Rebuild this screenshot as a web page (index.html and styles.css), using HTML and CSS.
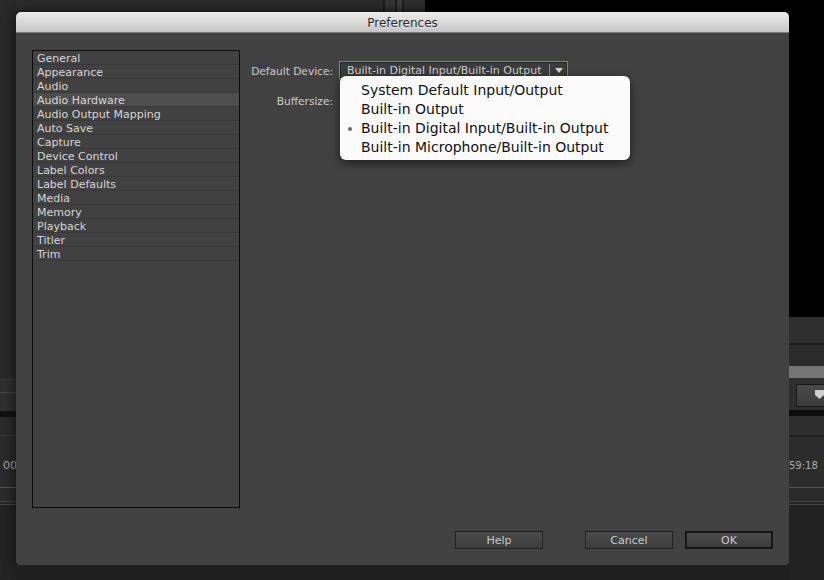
FILE: index.html
```html
<!DOCTYPE html>
<html lang="en">
<head>
    <meta charset="UTF-8">
    <meta name="viewport" content="width=device-width, initial-scale=1.0">
    <title>Preferences</title>
    <link rel="stylesheet" href="styles.css">
</head>
<body>
    <div class="desk">
        <div class="side side-left">
            <span class="timecode">00</span>
        </div>
        <div class="top-strip"></div>

        <div class="dialog">
            <div class="titlebar">Preferences</div>
            <div class="dialog-body">
                <div class="main-row">
                    <ul class="categories">
                        <li>General</li>
                        <li>Appearance</li>
                        <li>Audio</li>
                        <li class="selected">Audio Hardware</li>
                        <li>Audio Output Mapping</li>
                        <li>Auto Save</li>
                        <li>Capture</li>
                        <li>Device Control</li>
                        <li>Label Colors</li>
                        <li>Label Defaults</li>
                        <li>Media</li>
                        <li>Memory</li>
                        <li>Playback</li>
                        <li>Titler</li>
                        <li>Trim</li>
                    </ul>

                    <div class="settings">
                        <label class="field-label">Default Device:</label>
                        <div class="select">
                            <span class="select-value">Built-in Digital Input/Built-in Output</span>
                            <span class="select-arrow"></span>
                            <ul class="popup">
                                <li>System Default Input/Output</li>
                                <li>Built-in Output</li>
                                <li class="checked">Built-in Digital Input/Built-in Output</li>
                                <li>Built-in Microphone/Built-in Output</li>
                            </ul>
                        </div>
                        <label class="field-label">Buffersize:</label>
                        <div></div>
                    </div>
                </div>

                <div class="buttons">
                    <button class="btn btn-help">Help</button>
                    <button class="btn btn-cancel">Cancel</button>
                    <button class="btn btn-default">OK</button>
                </div>
            </div>
        </div>

        <div class="side side-right">
            <div class="tc-button"><span class="tc-arrow"></span></div>
            <span class="timecode timecode-right">59:18</span>
        </div>
        <div class="bottom-strip"></div>
    </div>
</body>
</html>
```

FILE: styles.css
```css
* {
    margin: 0;
    padding: 0;
    box-sizing: border-box;
}

body {
    background: #1e1e1e;
    font-family: "DejaVu Sans", Verdana, sans-serif;
    overflow: hidden;
}

.desk {
    display: grid;
    grid-template-columns: 16px 773px 35px;
    grid-template-rows: 12px 553px 15px;
    width: 824px;
    height: 580px;
}

/* app panels peeking out behind the dialog */
.side {
    grid-row: 1 / 4;
    overflow: hidden;
}

.side-left {
    grid-column: 1;
    background: linear-gradient(to bottom,
        #292929 0 379px, #3a3a3a 379px 380px, #2f2f2f 380px 392px,
        #454545 392px 393px, #2f2f2f 393px 411px, #111 411px 417px,
        #2a2a2a 417px 435px, #3c3c3c 435px 436px, #2b2b2b 436px 487px,
        #555 487px 488px, #2b2b2b 488px 501px, #444 501px 502px,
        #262626 502px 504px, #444 504px 505px, #232323 505px);
    padding-top: 459px;
    padding-left: 3px;
}

.side-right {
    grid-column: 3;
    background: linear-gradient(to bottom,
        #000 0 317px, #2f2f2f 317px 343px, #1c1c1c 343px 345px,
        #2c2c2c 345px 366px, #757575 366px 378px, #2e2e2e 378px 410px,
        #0c0c0c 410px 416px, #2d2d2d 416px 435px, #1f1f1f 435px 437px,
        #2c2c2c 437px 487px, #555 487px 488px, #2b2b2b 488px 501px,
        #444 501px 502px, #262626 502px 504px, #444 504px 505px,
        #222 505px);
    padding-top: 384px;
}

.top-strip {
    grid-column: 2;
    grid-row: 1;
    background: linear-gradient(to right,
        #2c2c2c 0 367px, #1b1b1b 367px 369px, #353535 369px 379px,
        #1e1e1e 379px 381px, #3c3c3c 381px 386px, #1e1e1e 386px 388px,
        #2e2e2e 388px 409px, #000 409px);
}

.bottom-strip {
    grid-column: 2;
    grid-row: 3;
    background: #1f1f1f;
}

.timecode {
    display: block;
    color: #a9a9a9;
    font-size: 11px;
    line-height: 14px;
    white-space: nowrap;
}

.timecode-right {
    margin-top: 52px;
    font-size: 10px;
}

.tc-button {
    width: 30px;
    height: 23px;
    margin-left: 7px;
    border: 1px solid #161616;
    background: linear-gradient(#4a4a4a, #3a3a3a);
    padding: 5px 0 0 18px;
}

.tc-arrow {
    display: block;
    width: 9px;
    height: 9px;
    background: #cfcfcf;
    clip-path: polygon(0 0, 100% 0, 100% 55%, 50% 100%, 0 55%);
}

/* dialog */
.dialog {
    grid-column: 2;
    grid-row: 2;
    display: flex;
    flex-direction: column;
    border-radius: 5px 5px 4px 4px;
    box-shadow: 0 0 14px rgba(0, 0, 0, 0.7);
    background: #414141;
}

.titlebar {
    height: 21px;
    padding-top: 2px;
    background: linear-gradient(#ececec, #c6c6c6);
    border-bottom: 1px solid #7c7c7c;
    border-radius: 5px 5px 0 0;
    color: #2a2a2a;
    font-size: 12px;
    line-height: 18px;
    text-align: center;
    text-shadow: 0 1px 0 rgba(255, 255, 255, 0.6);
}

.dialog-body {
    flex: 1;
    display: flex;
    flex-direction: column;
    padding: 17px 16px 16px;
}

.main-row {
    display: flex;
    height: 458px;
}

.categories {
    list-style: none;
    width: 208px;
    height: 458px;
    border: 1px solid #0c0c0c;
    background: #414141;
}

.categories li {
    height: 14px;
    padding: 1px 0 0 4px;
    line-height: 13px;
    border-bottom: 1px solid #383838;
    color: #d6d6d6;
    font-size: 11px;
}

.categories li.selected {
    background: #4e4e4e;
}

.settings {
    display: grid;
    grid-template-columns: 85px 229px;
    grid-template-rows: 18px 18px;
    row-gap: 12px;
    column-gap: 6px;
    align-items: center;
    margin-left: 8px;
    margin-top: 11px;
    align-content: start;
}

.field-label {
    padding-top: 2px;
    text-align: right;
    color: #cdcdcd;
    font-size: 10.6px;
    white-space: nowrap;
}

.select {
    position: relative;
    display: flex;
    align-items: center;
    height: 18px;
    border: 1px solid #a3822f;
    background: #3b3b3b;
    box-shadow: inset 0 0 0 1px #262626;
}

.select-value {
    flex: 1;
    padding: 1px 0 0 7px;
    color: #cfcfcf;
    font-size: 11px;
    white-space: nowrap;
}

.select-arrow {
    width: 18px;
    height: 12px;
    border-left: 1px solid #8a8a8a;
    position: relative;
}

.select-arrow::after {
    content: "";
    position: absolute;
    left: 5px;
    top: 4px;
    border-left: 4px solid transparent;
    border-right: 4px solid transparent;
    border-top: 5px solid #d0d0d0;
}

.popup {
    position: absolute;
    left: 0;
    top: 14px;
    width: 290px;
    list-style: none;
    background: #fbfbfb;
    border-radius: 6px;
    box-shadow: 0 3px 10px rgba(0, 0, 0, 0.55);
    padding: 5px 0 3px;
    z-index: 10;
}

.popup li {
    position: relative;
    padding-left: 21px;
    color: #111;
    font-size: 14px;
    line-height: 19px;
    white-space: nowrap;
}

.popup li.checked::before {
    content: "";
    position: absolute;
    left: 8px;
    top: 8px;
    width: 4px;
    height: 4px;
    border-radius: 50%;
    background: #6a6a6a;
}

.buttons {
    display: flex;
    justify-content: flex-end;
    margin-top: 23px;
}

.btn {
    width: 88px;
    height: 18px;
    border: 1px solid #202020;
    background: linear-gradient(#4b4b4b, #3c3c3c);
    color: #cacaca;
    font-family: "DejaVu Sans", Verdana, sans-serif;
    font-size: 11px;
}

.btn-help {
    margin-right: 42px;
}

.btn-cancel {
    margin-right: 12px;
}

.btn-default {
    border: 2px solid #161616;
}
```
